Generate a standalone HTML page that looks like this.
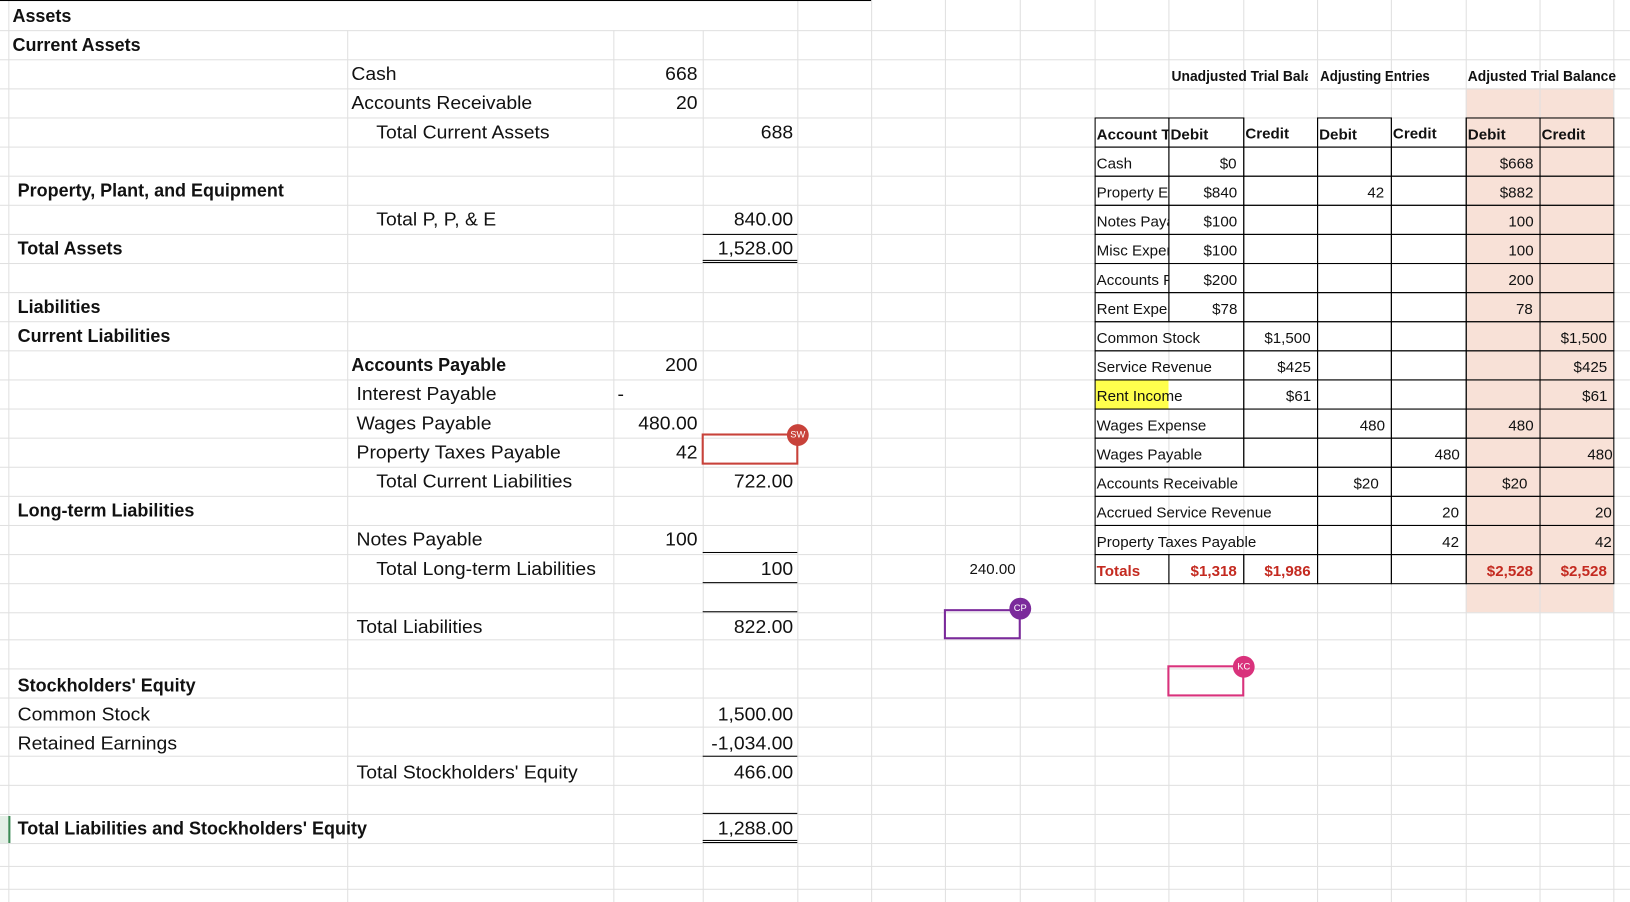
<!DOCTYPE html>
<html><head><meta charset="utf-8">
<style>
html,body{margin:0;padding:0;background:#fff;overflow:hidden;width:1630px;height:902px}
#w{position:absolute;left:0;top:0;width:1568px;height:868px;transform:scale(1.0395);transform-origin:0 0;font-family:"Liberation Sans",sans-serif;color:#111}
.h{position:absolute;left:0;width:1568px;height:1px;background:#e0e0e0}
.v{position:absolute;width:1px;background:#e0e0e0}
.k{position:absolute;background:#000}
.t{position:absolute;height:28px;line-height:29px;font-size:18px;white-space:nowrap;transform:scaleX(1.035);transform-origin:0 50%}
.n{position:absolute;height:28px;line-height:29px;font-size:18px;white-space:nowrap;text-align:right;transform:scaleX(1.035);transform-origin:100% 50%}
.b{font-weight:bold;transform:scaleX(.96)}
.hb{font-weight:bold}
.c{position:absolute;box-sizing:border-box;border:1px solid #000;height:29px;font-size:14px;line-height:30px;padding:0 6px 0 1px;white-space:nowrap;overflow:hidden}
.c span{display:inline-block;transform:scaleX(1.04);transform-origin:0 50%}
.r{text-align:right}
.r span{transform-origin:100% 50%}
.red{color:#c42a20;font-weight:bold}
.nt{border-top:none}
.dot{position:absolute;width:21px;height:21px;border-radius:50%;color:#fff;font-size:9px;line-height:21px;text-align:center}
</style></head><body><div id="w">
<div style="position:absolute;left:1410px;top:85px;width:142px;height:504px;background:#f8e1d7"></div>
<div class="h" style="top:29px"></div><div class="h" style="top:57px"></div><div class="h" style="top:85px"></div><div class="h" style="top:113px"></div><div class="h" style="top:141px"></div><div class="h" style="top:169px"></div><div class="h" style="top:197px"></div><div class="h" style="top:225px"></div><div class="h" style="top:253px"></div><div class="h" style="top:281px"></div><div class="h" style="top:309px"></div><div class="h" style="top:337px"></div><div class="h" style="top:365px"></div><div class="h" style="top:393px"></div><div class="h" style="top:421px"></div><div class="h" style="top:449px"></div><div class="h" style="top:477px"></div><div class="h" style="top:505px"></div><div class="h" style="top:533px"></div><div class="h" style="top:561px"></div><div class="h" style="top:589px"></div><div class="h" style="top:615px"></div><div class="h" style="top:643px"></div><div class="h" style="top:671px"></div><div class="h" style="top:699px"></div><div class="h" style="top:727px"></div><div class="h" style="top:755px"></div><div class="h" style="top:783px"></div><div class="h" style="top:811px"></div><div class="h" style="top:833px"></div><div class="h" style="top:855px"></div>
<div class="v" style="left:8px;top:0;height:868px"></div>
<div class="v" style="left:334px;top:29px;height:839px"></div>
<div class="v" style="left:590px;top:29px;height:839px"></div>
<div class="v" style="left:676px;top:29px;height:839px"></div>
<div class="v" style="left:767px;top:0;height:868px"></div>
<div class="v" style="left:838px;top:0;height:868px"></div>
<div class="v" style="left:909px;top:0;height:868px"></div>
<div class="v" style="left:981px;top:0;height:868px"></div>
<div class="v" style="left:1053px;top:0;height:868px"></div>
<div class="v" style="left:1124px;top:0;height:868px"></div>
<div class="v" style="left:1196px;top:0;height:868px"></div>
<div class="v" style="left:1267px;top:0;height:868px"></div>
<div class="v" style="left:1338px;top:0;height:868px"></div>
<div class="v" style="left:1410px;top:0;height:868px"></div>
<div class="v" style="left:1481px;top:0;height:868px"></div>
<div class="v" style="left:1552px;top:0;height:868px"></div>
<div style="position:absolute;left:0;top:785px;width:8px;height:26px;background:#e3efe6;border-right:2px solid #3c8a55"></div>
<div class="k" style="left:0;top:0;width:838px;height:1px"></div>

<div class="t b" style="left:12px;top:1px">Assets</div>
<div class="t b" style="left:12px;top:29px">Current Assets</div>
<div class="t" style="left:338px;top:57px">Cash</div><div class="n" style="left:590px;width:81px;top:57px">668</div>
<div class="t" style="left:338px;top:85px">Accounts Receivable</div><div class="n" style="left:590px;width:81px;top:85px">20</div>
<div class="t" style="left:362px;top:113px">Total Current Assets</div><div class="n" style="left:676px;width:87px;top:113px">688</div>
<div class="t b" style="left:17px;top:169px">Property, Plant, and Equipment</div>
<div class="t" style="left:362px;top:197px">Total P, P, &amp; E</div><div class="n" style="left:676px;width:87px;top:197px">840.00</div>
<div class="k" style="left:676px;top:225px;width:91px;height:1px"></div>
<div class="t b" style="left:17px;top:225px">Total Assets</div><div class="n" style="left:676px;width:87px;top:225px">1,528.00</div>
<div class="k" style="left:676px;top:250px;width:91px;height:1px"></div><div class="k" style="left:676px;top:252px;width:91px;height:1px"></div>
<div class="t b" style="left:17px;top:281px">Liabilities</div>
<div class="t b" style="left:17px;top:309px">Current Liabilities</div>
<div class="t b" style="left:338px;top:337px">Accounts Payable</div><div class="n" style="left:590px;width:81px;top:337px">200</div>
<div class="t" style="left:343px;top:365px">Interest Payable</div><div class="t" style="left:594px;top:365px">-</div>
<div class="t" style="left:343px;top:393px">Wages Payable</div><div class="n" style="left:590px;width:81px;top:393px">480.00</div>
<div class="t" style="left:343px;top:421px">Property Taxes Payable</div><div class="n" style="left:590px;width:81px;top:421px">42</div>
<div class="t" style="left:362px;top:449px">Total Current Liabilities</div><div class="n" style="left:676px;width:87px;top:449px">722.00</div>
<div class="t b" style="left:17px;top:477px">Long-term Liabilities</div>
<div class="t" style="left:343px;top:505px">Notes Payable</div><div class="n" style="left:590px;width:81px;top:505px">100</div>
<div class="k" style="left:676px;top:531px;width:91px;height:1px"></div>
<div class="t" style="left:362px;top:533px">Total Long-term Liabilities</div><div class="n" style="left:676px;width:87px;top:533px">100</div>
<div class="k" style="left:676px;top:560px;width:91px;height:1px"></div>
<div class="k" style="left:676px;top:588px;width:91px;height:1px"></div>
<div class="t" style="left:343px;top:589px">Total Liabilities</div><div class="n" style="left:676px;width:87px;top:589px">822.00</div>
<div class="t b" style="left:17px;top:645px">Stockholders' Equity</div>
<div class="t" style="left:17px;top:673px">Common Stock</div><div class="n" style="left:676px;width:87px;top:673px">1,500.00</div>
<div class="t" style="left:17px;top:701px">Retained Earnings</div><div class="n" style="left:676px;width:87px;top:701px">-1,034.00</div>
<div class="k" style="left:676px;top:727px;width:91px;height:1px"></div>
<div class="t" style="left:343px;top:729px">Total Stockholders' Equity</div><div class="n" style="left:676px;width:87px;top:729px">466.00</div>
<div class="k" style="left:676px;top:782px;width:91px;height:1px"></div>
<div class="t b" style="left:17px;top:783px">Total Liabilities and Stockholders' Equity</div><div class="n" style="left:676px;width:87px;top:783px">1,288.00</div>
<div class="k" style="left:676px;top:808px;width:91px;height:1px"></div><div class="k" style="left:676px;top:810px;width:91px;height:1px"></div>

<div class="n" style="left:909px;width:68px;top:533px;font-size:14px">240.00</div>

<div class="t" style="left:1127px;top:59px;font-size:14px;font-weight:bold;width:138px;overflow:hidden;transform:scaleX(.95)">Unadjusted Trial Balance</div>
<div class="t b" style="left:1270px;top:59px;font-size:14px;transform:scaleX(.91)">Adjusting Entries</div>
<div class="t b" style="left:1412px;top:59px;font-size:14px;transform:scaleX(.95)">Adjusted Trial Balance</div>

<div class="c hb" style="left:1053px;top:113px;width:72px"><span>Account Title</span></div>
<div class="c hb" style="left:1124px;top:113px;width:73px"><span>Debit</span></div>
<div class="c hb nt" style="left:1196px;top:113px;width:72px"><span>Credit</span></div>
<div class="c hb" style="left:1267px;top:113px;width:72px"><span>Debit</span></div>
<div class="c hb nt" style="left:1338px;top:113px;width:73px"><span>Credit</span></div>
<div class="c hb" style="left:1410px;top:113px;width:72px"><span>Debit</span></div>
<div class="c hb" style="left:1481px;top:113px;width:72px"><span>Credit</span></div>

<div class="c" style="left:1053px;top:141px;width:72px"><span>Cash</span></div><div class="c r" style="left:1124px;top:141px;width:73px"><span>$0</span></div><div class="c" style="left:1196px;top:141px;width:72px"></div><div class="c" style="left:1267px;top:141px;width:72px"></div><div class="c" style="left:1338px;top:141px;width:73px"></div><div class="c r" style="left:1410px;top:141px;width:72px"><span>$668</span></div><div class="c" style="left:1481px;top:141px;width:72px"></div>
<div class="c" style="left:1053px;top:169px;width:72px"><span>Property Equipment</span></div><div class="c r" style="left:1124px;top:169px;width:73px"><span>$840</span></div><div class="c" style="left:1196px;top:169px;width:72px"></div><div class="c r" style="left:1267px;top:169px;width:72px"><span>42</span></div><div class="c" style="left:1338px;top:169px;width:73px"></div><div class="c r" style="left:1410px;top:169px;width:72px"><span>$882</span></div><div class="c" style="left:1481px;top:169px;width:72px"></div>
<div class="c" style="left:1053px;top:197px;width:72px"><span>Notes Payable</span></div><div class="c r" style="left:1124px;top:197px;width:73px"><span>$100</span></div><div class="c" style="left:1196px;top:197px;width:72px"></div><div class="c" style="left:1267px;top:197px;width:72px"></div><div class="c" style="left:1338px;top:197px;width:73px"></div><div class="c r" style="left:1410px;top:197px;width:72px"><span>100</span></div><div class="c" style="left:1481px;top:197px;width:72px"></div>
<div class="c" style="left:1053px;top:225px;width:72px"><span>Misc Expense</span></div><div class="c r" style="left:1124px;top:225px;width:73px"><span>$100</span></div><div class="c" style="left:1196px;top:225px;width:72px"></div><div class="c" style="left:1267px;top:225px;width:72px"></div><div class="c" style="left:1338px;top:225px;width:73px"></div><div class="c r" style="left:1410px;top:225px;width:72px"><span>100</span></div><div class="c" style="left:1481px;top:225px;width:72px"></div>
<div class="c" style="left:1053px;top:253px;width:72px"><span>Accounts Payable</span></div><div class="c r" style="left:1124px;top:253px;width:73px"><span>$200</span></div><div class="c" style="left:1196px;top:253px;width:72px"></div><div class="c" style="left:1267px;top:253px;width:72px"></div><div class="c" style="left:1338px;top:253px;width:73px"></div><div class="c r" style="left:1410px;top:253px;width:72px"><span>200</span></div><div class="c" style="left:1481px;top:253px;width:72px"></div>
<div class="c" style="left:1053px;top:281px;width:72px"><span>Rent Expense</span></div><div class="c r" style="left:1124px;top:281px;width:73px"><span>$78</span></div><div class="c" style="left:1196px;top:281px;width:72px"></div><div class="c" style="left:1267px;top:281px;width:72px"></div><div class="c" style="left:1338px;top:281px;width:73px"></div><div class="c r" style="left:1410px;top:281px;width:72px"><span>78</span></div><div class="c" style="left:1481px;top:281px;width:72px"></div>
<div class="c" style="left:1053px;top:309px;width:144px"><span>Common Stock</span></div><div class="c r" style="left:1196px;top:309px;width:72px"><span>$1,500</span></div><div class="c" style="left:1267px;top:309px;width:72px"></div><div class="c" style="left:1338px;top:309px;width:73px"></div><div class="c" style="left:1410px;top:309px;width:72px"></div><div class="c r" style="left:1481px;top:309px;width:72px"><span>$1,500</span></div>
<div class="c" style="left:1053px;top:337px;width:144px"><span>Service Revenue</span></div><div class="c r" style="left:1196px;top:337px;width:72px"><span>$425</span></div><div class="c" style="left:1267px;top:337px;width:72px"></div><div class="c" style="left:1338px;top:337px;width:73px"></div><div class="c" style="left:1410px;top:337px;width:72px"></div><div class="c r" style="left:1481px;top:337px;width:72px"><span>$425</span></div>
<div class="c" style="left:1053px;top:365px;width:144px;background:linear-gradient(90deg,#ffff4d 0,#ffff4d 70px,#fff 70px)"><span>Rent Income</span></div><div class="c r" style="left:1196px;top:365px;width:72px"><span>$61</span></div><div class="c" style="left:1267px;top:365px;width:72px"></div><div class="c" style="left:1338px;top:365px;width:73px"></div><div class="c" style="left:1410px;top:365px;width:72px"></div><div class="c r" style="left:1481px;top:365px;width:72px"><span>$61</span></div>
<div class="c" style="left:1053px;top:393px;width:144px"><span>Wages Expense</span></div><div class="c" style="left:1196px;top:393px;width:72px"></div><div class="c r" style="left:1267px;top:393px;width:72px"><span>480</span></div><div class="c" style="left:1338px;top:393px;width:73px"></div><div class="c r" style="left:1410px;top:393px;width:72px"><span>480</span></div><div class="c" style="left:1481px;top:393px;width:72px"></div>
<div class="c" style="left:1053px;top:421px;width:144px"><span>Wages Payable</span></div><div class="c" style="left:1196px;top:421px;width:72px"></div><div class="c" style="left:1267px;top:421px;width:72px"></div><div class="c r" style="left:1338px;top:421px;width:73px"><span>480</span></div><div class="c" style="left:1410px;top:421px;width:72px"></div><div class="c r" style="left:1481px;top:421px;width:72px;padding-right:1px"><span>480</span></div>
<div class="c" style="left:1053px;top:449px;width:215px"><span>Accounts Receivable</span></div><div class="c r" style="left:1267px;top:449px;width:72px;padding-right:12px"><span>$20</span></div><div class="c" style="left:1338px;top:449px;width:73px"></div><div class="c r" style="left:1410px;top:449px;width:72px;padding-right:12px"><span>$20</span></div><div class="c" style="left:1481px;top:449px;width:72px"></div>
<div class="c" style="left:1053px;top:477px;width:215px"><span>Accrued Service Revenue</span></div><div class="c" style="left:1267px;top:477px;width:72px"></div><div class="c r" style="left:1338px;top:477px;width:73px"><span>20</span></div><div class="c" style="left:1410px;top:477px;width:72px"></div><div class="c r" style="left:1481px;top:477px;width:72px;padding-right:1px"><span>20</span></div>
<div class="c" style="left:1053px;top:505px;width:215px"><span>Property Taxes Payable</span></div><div class="c" style="left:1267px;top:505px;width:72px"></div><div class="c r" style="left:1338px;top:505px;width:73px"><span>42</span></div><div class="c" style="left:1410px;top:505px;width:72px"></div><div class="c r" style="left:1481px;top:505px;width:72px;padding-right:1px"><span>42</span></div>
<div class="c red" style="left:1053px;top:533px;width:72px"><span>Totals</span></div><div class="c r red" style="left:1124px;top:533px;width:73px"><span>$1,318</span></div><div class="c r red" style="left:1196px;top:533px;width:72px"><span>$1,986</span></div><div class="c" style="left:1267px;top:533px;width:72px"></div><div class="c" style="left:1338px;top:533px;width:73px"></div><div class="c r red" style="left:1410px;top:533px;width:72px"><span>$2,528</span></div><div class="c r red" style="left:1481px;top:533px;width:72px"><span>$2,528</span></div>

<div style="position:absolute;left:675px;top:417px;width:93px;height:30px;box-sizing:border-box;border:2px solid #c8423a"></div>
<div class="dot" style="left:757px;top:408px;background:#c8423a">SW</div>
<div style="position:absolute;left:908px;top:586px;width:74px;height:29px;box-sizing:border-box;border:2px solid #7b2a9b"></div>
<div class="dot" style="left:971px;top:575px;background:#7b2a9b">CP</div>
<div style="position:absolute;left:1123px;top:640px;width:74px;height:30px;box-sizing:border-box;border:2px solid #d9327c"></div>
<div class="dot" style="left:1186px;top:631px;background:#d9327c">KC</div>
</div></body></html>
